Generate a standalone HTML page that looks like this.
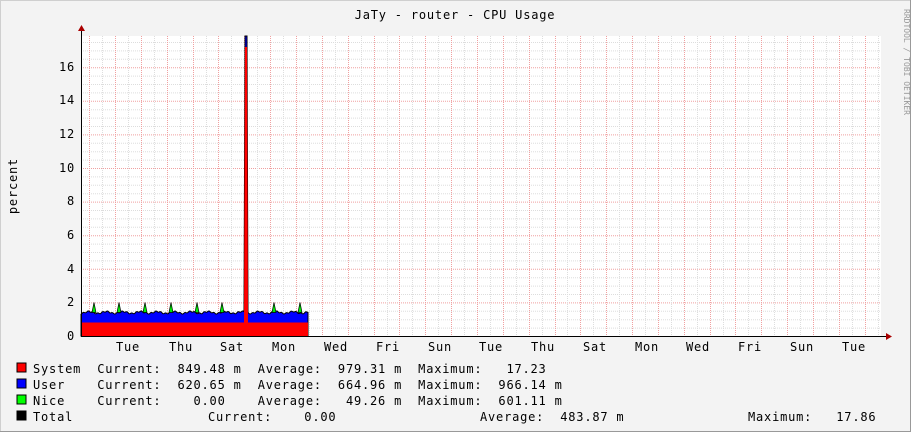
<!DOCTYPE html>
<html><head><style>body{margin:0;background:#f3f3f3}svg{display:block}text{font-family:"DejaVu Sans Mono","Liberation Mono",monospace;font-size:12px;fill:#000;letter-spacing:0.8px}</style></head><body>
<svg width="911" height="432" xmlns="http://www.w3.org/2000/svg">
<rect width="911" height="432" fill="#f3f3f3"/>
<rect x="0.5" y="0.5" width="910" height="431" fill="none" stroke="#cfcfcf"/>
<path d="M910.5 0V432M0 431.5H911" stroke="#999"/>
<rect x="81" y="36" width="800" height="300" fill="#fff"/>
<g id="g"></g>
<text x="455" y="19" text-anchor="middle">JaTy - router - CPU Usage</text>
<text transform="translate(17,186) rotate(-90)" text-anchor="middle">percent</text>
<text transform="translate(904,62) rotate(90)" text-anchor="middle" style="font-size:8px;fill:#999;letter-spacing:0">RRDTOOL / TOBI OETIKER</text>
<g text-anchor="end">
<text x="75" y="340">0</text><text x="75" y="306">2</text><text x="75" y="273">4</text><text x="75" y="239">6</text><text x="75" y="205">8</text><text x="75" y="172">10</text><text x="75" y="138">12</text><text x="75" y="104">14</text><text x="75" y="71">16</text>
</g>
<g text-anchor="middle">
<text x="128" y="351">Tue</text><text x="181" y="351">Thu</text><text x="232" y="351">Sat</text><text x="284" y="351">Mon</text><text x="336" y="351">Wed</text><text x="388" y="351">Fri</text><text x="440" y="351">Sun</text><text x="491" y="351">Tue</text><text x="543" y="351">Thu</text><text x="595" y="351">Sat</text><text x="647" y="351">Mon</text><text x="698" y="351">Wed</text><text x="750" y="351">Fri</text><text x="802" y="351">Sun</text><text x="854" y="351">Tue</text>
</g>
<rect x="17" y="363" width="9" height="9" fill="#f00" stroke="#000"/>
<rect x="17" y="379" width="9" height="9" fill="#00f" stroke="#000"/>
<rect x="17" y="395" width="9" height="9" fill="#0f0" stroke="#000"/>
<rect x="17" y="411" width="9" height="9" fill="#000" stroke="#000"/>
<text x="33" y="373" xml:space="preserve">System  Current:  849.48 m  Average:  979.31 m  Maximum:   17.23</text>
<text x="33" y="389" xml:space="preserve">User    Current:  620.65 m  Average:  664.96 m  Maximum:  966.14 m</text>
<text x="33" y="405" xml:space="preserve">Nice    Current:    0.00    Average:   49.26 m  Maximum:  601.11 m</text>
<text x="33" y="421" xml:space="preserve">Total</text>
<text x="208" y="421" xml:space="preserve">Current:    0.00</text>
<text x="480" y="421" xml:space="preserve">Average:  483.87 m</text>
<text x="748" y="421" xml:space="preserve">Maximum:   17.86</text>
</svg>
<script>
var g=document.getElementById('g'),s='';
for(var i=0;i<36;i++){var y=336-i*8.4;if(y<36)break;s+='<line x1="81" x2="881" y1="'+(y+.5)+'" y2="'+(y+.5)+'" stroke="'+(i%4==0&&i?'#f0a0a0':'#ddd')+'" stroke-dasharray="1,1"/>';}
for(var k=0;k<64;k++){var x=76.8+k*12.925;if(x<81)continue;if(x>881)break;s+='<line y1="36" y2="336" x1="'+(x|0)+'.5" x2="'+(x|0)+'.5" stroke="'+(k%2?'#f0a0a0':'#ddd')+'" stroke-dasharray="1,1"/>';}
var blue='M81 336',red='M81 336';
for(var x=81;x<=308;x++){var u=1.4+0.06*Math.sin(x*0.37)+0.04*Math.sin(x*1.3);var r=0.8;if(x>=245&&x<=247){u=17.86;r=17.2}
 blue+=' L'+x+' '+(336-u*16.8).toFixed(1);red+=' L'+x+' '+(336-r*16.8);}
blue+=' L308 336Z';red+=' L308 336Z';
s+='<path d="'+blue+'" fill="#00f" stroke="#000" stroke-width="1"/><path d="'+red+'" fill="#f00"/>';
[94,119,145,171,197,222,274,300].forEach(function(x){s+='<path d="M'+(x-2)+' '+(336-1.4*16.8)+' L'+x+' '+(336-2*16.8)+' L'+(x+2)+' '+(336-1.4*16.8)+'Z" fill="#0e0" stroke="#000" stroke-width="0.7"/>';});
s+='<path d="M81 336.5H886M81.5 336V31" stroke="#000"/><path d="M886 333l6 3.5-6 3.5zM78 31l3.5-6 3.5 6z" fill="#a00"/>';
g.innerHTML=s;
</script>
</body></html>
